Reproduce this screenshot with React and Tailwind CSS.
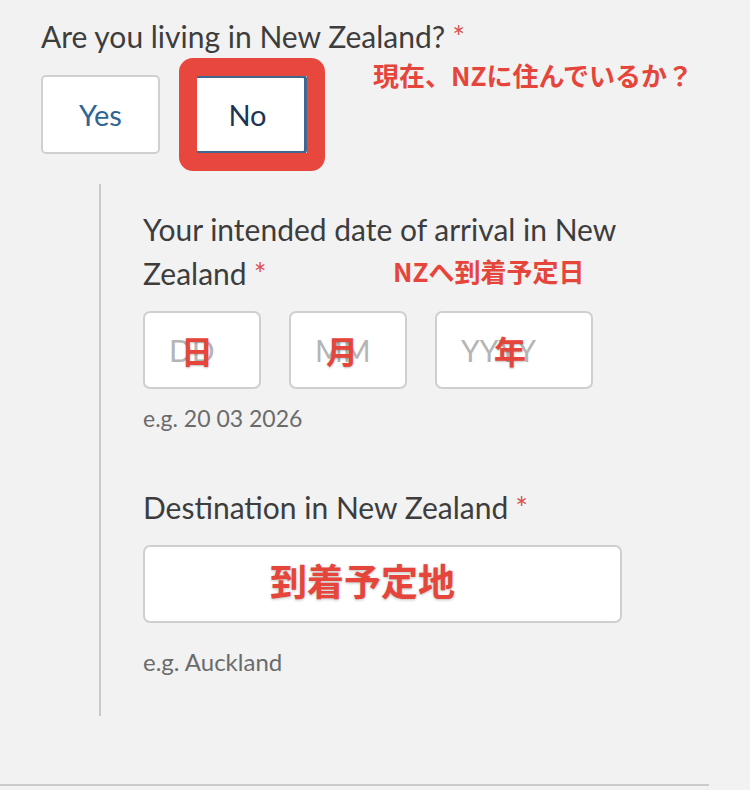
import React from "react";

const red = "text-[#e5453b]";

function Req() {
  return <span className="text-[#d9534f] ml-[7px]">*</span>;
}

function Note({ children, className = "" }) {
  return (
    <span
      className={`font-bold ${red} [font-family:'Noto_Sans_CJK_JP','Noto_Sans',sans-serif] ${className}`}
    >
      {children}
    </span>
  );
}

function DateBox({ placeholder, kanji, width, shift }) {
  return (
    <div
      className={`${width} h-[78px] bg-white border-2 border-[#cfcfcf] rounded-[7px] flex items-center pl-[24px] relative`}
    >
      <span className="text-[30px] text-[#b5b5b5]">{placeholder}</span>
      <span className="absolute inset-0 flex items-center justify-center">
        <Note className={`text-[32px] leading-none [text-shadow:0_1px_2px_rgba(0,0,0,0.25)] ${shift}`}>
          {kanji}
        </Note>
      </span>
    </div>
  );
}

export default function App() {
  return (
    <div className="min-h-[790px] w-[750px] bg-[#f2f2f2] relative overflow-hidden [font-family:Lato,'Noto_Sans',sans-serif] text-[#3d3d3d]">
      <div className="pl-[41px] pt-[16px] relative">
        <div className="text-[30px] leading-[40px]">
          Are you living in New Zealand?
          <Req />
        </div>

        <Note className="absolute left-[373px] top-[60px] text-[26px] leading-[30px]">
          現在、NZに住んでいるか？
        </Note>

        <div className="flex gap-[28px] mt-[19px]">
          <button className="w-[119px] h-[79px] bg-white border-2 border-[#d0d0d0] rounded-[5px] text-[29px] text-[#2f6594]">
            Yes
          </button>
          <div className="relative">
            <button className="w-[119px] h-[79px] bg-white border-[3px] border-[#3e6792] rounded-[4px] text-[29px] text-[#1c3553]">
              No
            </button>
            <div className="absolute -left-[9px] -top-[17px] w-[146px] h-[113px] border-[18px] border-[#e8473e] rounded-[14px] pointer-events-none" />
          </div>
        </div>
      </div>

      <div className="ml-[99px] mt-[30px] border-l-2 border-[#c9c9c9] pl-[42px] pt-[23px] h-[532px]">
        <div className="text-[30px] leading-[44px] w-[500px] relative">
          Your intended date of arrival in New Zealand
          <Req />
          <Note className="absolute left-[250px] top-[50px] text-[26px] leading-[28px]">
            NZへ到着予定日
          </Note>
        </div>

        <div className="flex gap-[28px] mt-[16px]">
          <DateBox placeholder="DD" kanji="日" width="w-[118px]" shift="-ml-[10px]" />
          <DateBox placeholder="MM" kanji="月" width="w-[118px]" shift="-ml-[12px]" />
          <DateBox placeholder="YYYY" kanji="年" width="w-[158px]" shift="-ml-[8px]" />
        </div>

        <div className="text-[23px] text-[#6b6b6b] mt-[14px] leading-[30px]">e.g. 20 03 2026</div>

        <div className="text-[30px] leading-[40px] mt-[54px]">
          Destination in New Zealand
          <Req />
        </div>

        <div className="w-[479px] h-[78px] bg-white border-2 border-[#cfcfcf] rounded-[7px] mt-[18px] flex items-center pl-[125px] pb-[8px]">
          <Note className="text-[37px] leading-none [text-shadow:0_1px_3px_rgba(0,0,0,0.25)]">
            到着予定地
          </Note>
        </div>

        <div className="text-[24px] text-[#6b6b6b] mt-[24px] leading-[30px]">e.g. Auckland</div>
      </div>

      <div className="absolute left-0 top-[784px] w-[709px] h-[2px] bg-[#cccccc]" />
    </div>
  );
}
